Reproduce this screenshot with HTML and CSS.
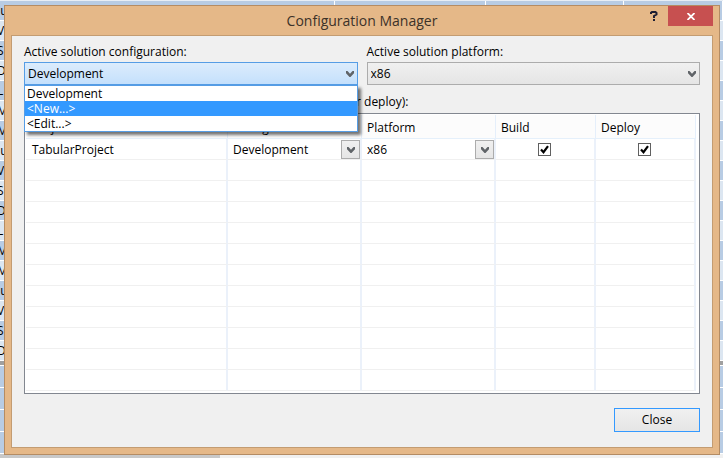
FILE: index.html
```html
<!DOCTYPE html>
<html lang="en">
<head>
    <meta charset="UTF-8">
    <meta name="viewport" content="width=device-width, initial-scale=1.0">
    <title>Configuration Manager</title>
    <link rel="stylesheet" href="styles.css">
</head>
<body>
    <div class="desktop">
        <!-- spreadsheet behind the dialog -->
        <div class="sheet">
            <div class="sheet-row first"><i></i><i></i><i></i><i></i><span>Ju</span></div>
            <div class="sheet-row">V</div>
            <div class="sheet-row">S</div>
            <div class="sheet-row">D</div>
            <div class="sheet-row">L</div>
            <div class="sheet-row">M</div>
            <div class="sheet-row">M</div>
            <div class="sheet-row">Ju</div>
            <div class="sheet-row">V</div>
            <div class="sheet-row">S</div>
            <div class="sheet-row">D</div>
            <div class="sheet-row">L</div>
            <div class="sheet-row">M</div>
            <div class="sheet-row">M</div>
            <div class="sheet-row">Ju</div>
            <div class="sheet-row">V</div>
            <div class="sheet-row">S</div>
            <div class="sheet-row">D</div>
            <div class="sheet-split"></div>
            <div class="sheet-empty"></div>
            <div class="sheet-empty"></div>
            <div class="sheet-empty"></div>
            <div class="sheet-empty"></div>
            <div class="sheet-scroll"></div>
        </div>

        <div class="dialog" role="dialog" aria-labelledby="title">
            <div class="titlebar">
                <h1 id="title">Configuration Manager</h1>
                <div class="caption-buttons">
                    <button class="help" type="button" aria-label="Help">
                        <svg width="8" height="10" viewBox="0 0 8 10"><path d="M1 3V1.8L2 1h3.500l1 1v1.500L4 5v2" fill="none" stroke="#1e1e32" stroke-width="2"/><path d="M3 8h2v2H3z" fill="#1e1e32"/></svg>
                    </button>
                    <button class="close" type="button" aria-label="Close window">
                        <svg width="8" height="7" viewBox="0 0 8 7"><path d="M.5 0l7 7M7.500 0l-7 7" stroke="#fff" stroke-width="1.800"/></svg>
                    </button>
                </div>
            </div>

            <div class="client">
                <div class="fields">
                    <div class="field">
                        <label for="configuration">Active solution configuration:</label>
                        <div class="combo combo-open">
                            <select id="configuration">
                                <option>Development</option>
                            </select>
                            <svg class="arrow" width="8" height="6" viewBox="0 0 8 6"><path d="M0 0l1.500 0L4 2.700 6.500 0 8 0v2.300L4.500 6h-1L0 2.300z" fill="#606468"/></svg>
                            <ul class="menu" role="listbox">
                                <li role="option">Development</li>
                                <li role="option" class="selected">&lt;New...&gt;</li>
                                <li role="option">&lt;Edit...&gt;</li>
                            </ul>
                        </div>
                    </div>
                    <div class="field">
                        <label for="platform">Active solution platform:</label>
                        <div class="combo">
                            <select id="platform">
                                <option>x86</option>
                            </select>
                            <svg class="arrow" width="8" height="6" viewBox="0 0 8 6"><path d="M0 0l1.500 0L4 2.700 6.500 0 8 0v2.300L4.500 6h-1L0 2.300z" fill="#606468"/></svg>
                        </div>
                    </div>
                </div>

                <p class="caption" id="contexts">Project contexts (check the project configurations to build or deploy):</p>
                <div class="grid">
                    <table aria-labelledby="contexts">
                        <colgroup>
                            <col>
                            <col class="col-combo">
                            <col class="col-combo">
                            <col class="col-check">
                            <col class="col-check">
                        </colgroup>
                        <thead>
                            <tr><th>Project</th><th>Configuration</th><th>Platform</th><th>Build</th><th>Deploy</th></tr>
                        </thead>
                        <tbody>
                            <tr>
                                <td>TabularProject</td>
                                <td>
                                    <div class="cell-combo">
                                        <select aria-label="Configuration"><option>Development</option></select>
                                        <span class="cell-arrow"><svg width="8" height="6" viewBox="0 0 8 6"><path d="M0 0l1.500 0L4 2.700 6.500 0 8 0v2.300L4.500 6h-1L0 2.300z" fill="#606468"/></svg></span>
                                    </div>
                                </td>
                                <td>
                                    <div class="cell-combo">
                                        <select aria-label="Platform"><option>x86</option></select>
                                        <span class="cell-arrow"><svg width="8" height="6" viewBox="0 0 8 6"><path d="M0 0l1.500 0L4 2.700 6.500 0 8 0v2.300L4.500 6h-1L0 2.300z" fill="#606468"/></svg></span>
                                    </div>
                                </td>
                                <td>
                                    <div class="check">
                                        <input type="checkbox" aria-label="Build" checked>
                                        <svg width="9" height="9" viewBox="0 0 9 9"><path d="M1 4.500l2.500 2.700L8 1.200" fill="none" stroke="#000" stroke-width="2.200"/></svg>
                                    </div>
                                </td>
                                <td>
                                    <div class="check">
                                        <input type="checkbox" aria-label="Deploy" checked>
                                        <svg width="9" height="9" viewBox="0 0 9 9"><path d="M1 4.500l2.500 2.700L8 1.200" fill="none" stroke="#000" stroke-width="2.200"/></svg>
                                    </div>
                                </td>
                            </tr>
                            <tr><td></td><td></td><td></td><td></td><td></td></tr>
                            <tr><td></td><td></td><td></td><td></td><td></td></tr>
                            <tr><td></td><td></td><td></td><td></td><td></td></tr>
                            <tr><td></td><td></td><td></td><td></td><td></td></tr>
                            <tr><td></td><td></td><td></td><td></td><td></td></tr>
                            <tr><td></td><td></td><td></td><td></td><td></td></tr>
                            <tr><td></td><td></td><td></td><td></td><td></td></tr>
                            <tr><td></td><td></td><td></td><td></td><td></td></tr>
                            <tr><td></td><td></td><td></td><td></td><td></td></tr>
                            <tr><td></td><td></td><td></td><td></td><td></td></tr>
                            <tr><td></td><td></td><td></td><td></td><td></td></tr>
                        </tbody>
                    </table>
                </div>

                <div class="actions">
                    <button class="btn" type="button">Close</button>
                </div>
            </div>
        </div>
    </div>
</body>
</html>
```
FILE: styles.css
```css
* {
    box-sizing: border-box;
}
body {
    margin: 0;
    font-family: "Open Sans", "Noto Sans", sans-serif;
    font-size: 12px;
    line-height: 16px;
    color: #000;
}
button, select, input {
    font: inherit;
    color: inherit;
    margin: 0;
    padding: 0;
    border-radius: 0;
}
svg {
    display: block;
}

/* desktop */
.desktop {
    display: grid;
    grid-template-rows: minmax(0, 1fr);
    height: 100vh;
    overflow: hidden;
}
.sheet, .dialog {
    grid-area: 1 / 1;
    min-width: 0;
}
.sheet {
    background: #f0f0f0;
}
.sheet-row {
    height: 20px;
    border-bottom: 1px solid #fff;
    background: #dce6f1;
    text-indent: -3px;
    line-height: 20px;
    overflow: hidden;
}
.sheet-row:nth-child(odd) {
    background: #b8cce4;
}
.sheet-row.first {
    display: grid;
    grid-template-columns: 167px 168px 151px 138px 1fr;
    height: 21px;
    border-top: 1px solid #e8eef5;
}
.sheet-row.first i {
    grid-row: 1;
    border-right: 1px solid #fff;
}
.sheet-row.first span {
    grid-area: 1 / 1;
}
.sheet-split {
    height: 5px;
    background: #a0a0a0;
    border-bottom: 1px solid #fff;
}
.sheet-empty {
    height: 22px;
    border-bottom: 1px solid #fff;
    background: #b8cce4;
}
.sheet-scroll {
    width: 220px;
    height: 10px;
    background: #c8c8c8;
}

/* dialog window */
.dialog {
    display: flex;
    flex-direction: column;
    margin: 5px 3px 3px 4px;
    padding: 0 6px 6px;
    border: 1px solid #b48c64;
    background: #e5b888;
}
.titlebar {
    display: grid;
    height: 29px;
}
.titlebar h1 {
    grid-area: 1 / 1;
    margin: 0;
    font-size: 14px;
    font-weight: 400;
    line-height: 29px;
    text-align: center;
    color: #3c3228;
}
.caption-buttons {
    grid-area: 1 / 1;
    justify-self: end;
    display: flex;
    align-items: flex-start;
}
.caption-buttons button {
    display: flex;
    align-items: center;
    justify-content: center;
    height: 20px;
    border: 0;
}
.help {
    width: 28px;
    background: none;
}
.close {
    width: 45px;
    background: #c75050;
}
.client {
    flex: 1;
    display: flex;
    flex-direction: column;
    min-height: 0;
    padding: 8px 12px 15px;
    border: 1px solid #c39c72;
    background: #f0f0f0;
}

/* top fields */
.fields {
    display: flex;
    gap: 9px;
}
.field {
    flex: 1;
    min-width: 0;
}
.field label {
    display: block;
    margin-bottom: 2px;
}
.combo {
    position: relative;
    display: grid;
    align-items: center;
}
.combo select {
    grid-area: 1 / 1;
    width: 100%;
    height: 23px;
    padding: 0 3px;
    appearance: none;
    border: 1px solid #acacac;
    background: linear-gradient(#f0f0f0, #e5e5e5);
    outline: none;
}
.combo-open select {
    border-color: #569de5;
    background: linear-gradient(#dcecfc, #c4e0fc);
}
.arrow {
    grid-area: 1 / 1;
    justify-self: end;
    margin-right: 4px;
    pointer-events: none;
}
.menu {
    position: absolute;
    z-index: 1;
    top: 100%;
    left: 0;
    right: 0;
    margin: 0;
    padding: 0;
    list-style: none;
    border: 1px solid #569de5;
    background: #fff;
    box-shadow: 3px 3px 3px rgba(0, 0, 0, 0.55);
}
.menu li {
    height: 15px;
    padding-left: 2px;
    line-height: 15px;
}
.menu .selected {
    background: #3399ff;
    color: #fff;
}

/* project contexts */
.caption {
    margin: 9px 0 3px;
    white-space: nowrap;
}
.grid {
    flex: 1;
    min-height: 0;
    padding: 1px 3px 2px 1px;
    border: 1px solid #828790;
    background: #fff;
    overflow: hidden;
}
table {
    width: 100%;
    table-layout: fixed;
    border-collapse: separate;
    border-spacing: 0;
}
.col-combo {
    width: 20%;
}
.col-check {
    width: 100px;
}
th, td {
    height: 21px;
    padding: 1px 0 0 5px;
    border-right: 2px solid #ebf1fa;
    border-bottom: 1px solid #f0f0f0;
    text-align: left;
    font-weight: 400;
    line-height: 16px;
}
th {
    height: 24px;
    padding-top: 2px;
    background: #fcfcfc;
    border-right: 1px solid #e5effb;
    border-bottom-color: #e5f0fb;
}
th:first-child, td:first-child {
    padding-left: 6px;
}
.cell-combo {
    display: grid;
    align-items: center;
    height: 19px;
}
.cell-combo select {
    grid-area: 1 / 1;
    width: 100%;
    appearance: none;
    border: 0;
    background: none;
}
.cell-arrow {
    grid-area: 1 / 1;
    justify-self: end;
    display: flex;
    align-items: center;
    justify-content: center;
    width: 19px;
    height: 19px;
    border: 1px solid #acacac;
    background: linear-gradient(#f0f0f0, #e5e5e5);
    pointer-events: none;
}
.check {
    display: grid;
    place-items: center;
    padding-right: 6px;
}
.check input {
    grid-area: 1 / 1;
    width: 13px;
    height: 13px;
    appearance: none;
    border: 1px solid #606060;
    background: #fff;
}
.check svg {
    grid-area: 1 / 1;
    z-index: 0;
    pointer-events: none;
}

/* bottom buttons */
.actions {
    display: flex;
    justify-content: flex-end;
    margin-top: 14px;
}
.btn {
    width: 86px;
    height: 24px;
    border: 1px solid #3399ff;
    background: linear-gradient(#f0f0f0, #e5e5e5);
}
```
